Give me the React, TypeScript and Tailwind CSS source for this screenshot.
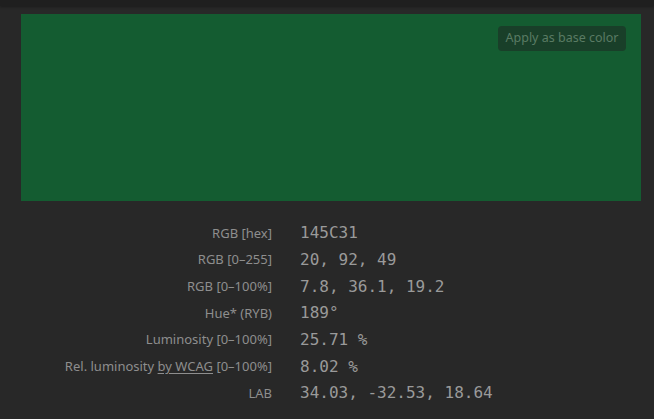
import React from 'react';

const rows: { label: React.ReactNode; value: string }[] = [
	{ label: 'RGB [hex]', value: '145C31' },
	{ label: 'RGB [0–255]', value: '20, 92, 49' },
	{ label: 'RGB [0–100%]', value: '7.8, 36.1, 19.2' },
	{ label: 'Hue* (RYB)', value: '189°' },
	{ label: 'Luminosity [0–100%]', value: '25.71 %' },
	{
		label: (
			<span>
				Rel. luminosity <span className="underline underline-offset-2">by WCAG</span> [0–100%]
			</span>
		),
		value: '8.02 %',
	},
	{ label: 'LAB', value: '34.03, -32.53, 18.64' },
];

const App: React.FC = () => {
	return (
		<div className="w-[654px] h-[419px] overflow-hidden bg-[#282828] font-['Noto_Sans',sans-serif]">
			{/* strip of the panel above */}
			<div className="h-[6px] bg-[#1f1f1f] shadow-[0_1px_3px_rgba(0,0,0,0.35)]" />

			<div className="pl-[21px] pr-[13px] pt-[8px]">
				{/* colour swatch */}
				<div className="h-[187px] bg-[#145C31] flex justify-end items-start pt-[12px] pr-[15px]">
					<button className="h-[25px] w-[128px] rounded-[4px] bg-[rgba(30,40,34,0.55)] text-[12.5px] text-[#5a7b64] leading-none">
						Apply as base color
					</button>
				</div>

				{/* values */}
				<div className="grid grid-cols-[251px_1fr] gap-x-[28px] pt-[19px]">
					{rows.map((r, i) => (
						<React.Fragment key={i}>
							<div className="h-[26.7px] flex items-center justify-end text-[13px] text-[#8e8e8e] whitespace-nowrap">
								{r.label}
							</div>
							<div className="h-[26.7px] flex items-center text-[16px] text-[#9a9a9a] font-['DejaVu_Sans_Mono',monospace] whitespace-nowrap">
								{r.value}
							</div>
						</React.Fragment>
					))}
				</div>
			</div>
		</div>
	);
};

export default App;
